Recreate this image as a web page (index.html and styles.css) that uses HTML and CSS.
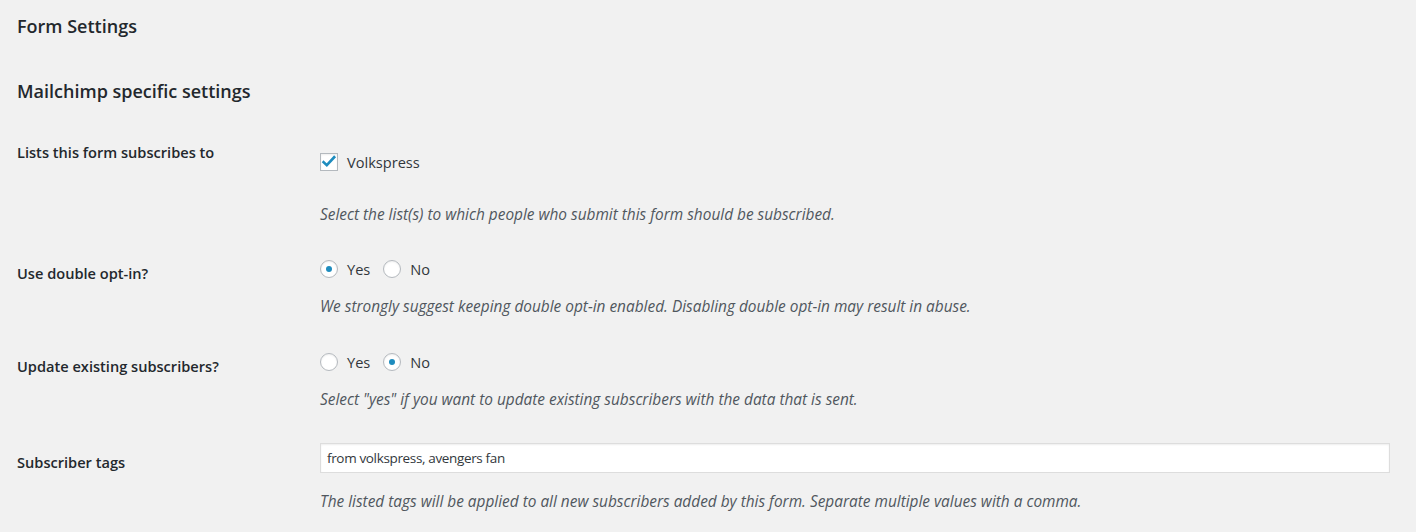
FILE: index.html
```html
<!DOCTYPE html>
<html lang="en">
<head>
<meta charset="utf-8">
<title>Form Settings</title>
<link rel="stylesheet" href="styles.css">
</head>
<body>
<div class="wrap">
  <h2 class="title">Form Settings</h2>
  <h3 class="subtitle">Mailchimp specific settings</h3>

  <div class="row row-lists">
    <div class="label">Lists this form subscribes to</div>
    <div class="field">
      <div class="choices">
        <label class="choice"><span class="cb"><svg viewBox="0 0 16 16" width="16" height="16"><path d="M2.6 8.2 L5.8 11.2 L13.2 3.2" fill="none" stroke="#1e8cbe" stroke-width="2.6" stroke-linecap="square" stroke-linejoin="miter"/></svg></span>Volkspress</label>
      </div>
      <p class="desc desc-lists">Select the list(s) to which people who submit this form should be subscribed.</p>
    </div>
  </div>

  <div class="row row-radio row-optin">
    <div class="label">Use double opt-in?</div>
    <div class="field">
      <div class="choices">
        <label class="choice"><span class="radio checked"></span>Yes</label>
        <label class="choice"><span class="radio"></span>No</label>
      </div>
      <p class="desc">We strongly suggest keeping double opt-in enabled. Disabling double opt-in may result in abuse.</p>
    </div>
  </div>

  <div class="row row-radio row-update">
    <div class="label">Update existing subscribers?</div>
    <div class="field">
      <div class="choices">
        <label class="choice"><span class="radio"></span>Yes</label>
        <label class="choice"><span class="radio checked"></span>No</label>
      </div>
      <p class="desc">Select "yes" if you want to update existing subscribers with the data that is sent.</p>
    </div>
  </div>

  <div class="row row-tags">
    <div class="label">Subscriber tags</div>
    <div class="field">
      <div class="text-input">from volkspress, avengers fan</div>
      <p class="desc desc-tags">The listed tags will be applied to all new subscribers added by this form. Separate multiple values with a comma.</p>
    </div>
  </div>
</div>
</body>
</html>
```

FILE: styles.css
```css
html, body {
  margin: 0;
  padding: 0;
  background: #f1f1f1;
}
body {
  font-family: "Open Sans", "Noto Sans", "Liberation Sans", sans-serif;
  color: #23282d;
  font-size: 14px;
}
.wrap {
  padding: 14px 26px 0 17px;
}
.title,
.subtitle {
  margin: 0;
  font-size: 18px;
  line-height: 24px;
  font-weight: 600;
  color: #23282d;
}
.subtitle {
  margin-top: 41px;
}
.row {
  display: flex;
  align-items: flex-start;
}
.label {
  width: 303px;
  flex: none;
  font-weight: 600;
  line-height: 18px;
  font-size: 14.6px;
}
.field {
  flex: 1;
  min-width: 0;
}
.row-lists {
  margin-top: 40px;
}
.row-lists .field {
  padding-top: 10px;
}
.row-radio .label {
  padding-top: 4px;
}
.row-optin {
  margin-top: 36px;
}
.row-update {
  margin-top: 37px;
}
.row-tags {
  margin-top: 34px;
}
.row-tags .label {
  padding-top: 10px;
}
.choices {
  display: flex;
  gap: 13px;
  line-height: 18px;
  font-size: 14.6px;
  color: #32373c;
}
.choice {
  display: flex;
  align-items: center;
  gap: 9px;
}
.cb,
.radio {
  box-sizing: border-box;
  width: 18px;
  height: 18px;
  border: 1px solid #b4b9be;
  background: #fff;
  box-shadow: inset 0 1px 2px rgba(0, 0, 0, 0.07);
  display: flex;
  align-items: center;
  justify-content: center;
  flex: none;
}
.radio {
  border-radius: 50%;
}
.radio.checked::before {
  content: "";
  width: 6px;
  height: 6px;
  border-radius: 50%;
  background: #1e8cbe;
}
.desc {
  margin: 20px 0 0;
  font-size: 15.4px;
  line-height: 18px;
  font-style: italic;
  color: #50575e;
}
.desc-lists {
  margin-top: 35px;
}
.desc-tags {
  margin-top: 20px;
}
.text-input {
  box-sizing: border-box;
  height: 30px;
  border: 1px solid #ddd;
  background: #fff;
  box-shadow: inset 0 1px 2px rgba(0, 0, 0, 0.07);
  padding: 0 6px;
  line-height: 28px;
  font-size: 13.5px;
  letter-spacing: -0.35px;
  color: #32373c;
}
```
